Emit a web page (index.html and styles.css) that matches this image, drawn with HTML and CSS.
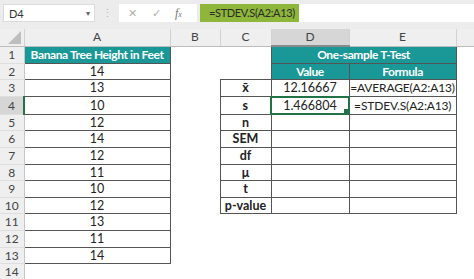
FILE: index.html
```html
<!DOCTYPE html>
<html>
<head>
<meta charset="utf-8">
<link rel="stylesheet" href="styles.css">
</head>
<body>
<div class="toolbar">
  <div class="namebox"><span class="name">D4</span><span class="caret">&#9662;</span></div>
  <div class="sep">&#8942;</div>
  <div class="fnbox">
    <span class="ico x">&#10005;</span>
    <span class="ico chk">&#10003;</span>
    <span class="ico fx"><i>f</i><small>x</small></span>
  </div>
  <div class="formula"><span class="sel">=STDEV.S(A2:A13)</span></div>
</div>
<table class="sheet">
  <colgroup>
    <col class="c-rh"><col class="c-a"><col class="c-b"><col class="c-c"><col class="c-d"><col class="c-e"><col class="c-f">
  </colgroup>
  <tr class="hdr">
    <th class="corner"><span class="tri"></span></th><th>A</th><th>B</th><th>C</th><th class="hsel">D</th><th>E</th><th></th>
  </tr>
  <tr><th class="rh">1</th><td class="b teal">Banana Tree Height in Feet</td><td></td><td></td><td class="b teal" colspan="2">One-sample T-Test</td><td></td></tr>
  <tr><th class="rh">2</th><td class="b">14</td><td></td><td></td><td class="b teal">Value</td><td class="b teal lsep">Formula</td><td></td></tr>
  <tr><th class="rh">3</th><td class="b">13</td><td></td><td class="b lab">x&#772;</td><td class="b">12.16667</td><td class="b fm">=AVERAGE(A2:A13)</td><td></td></tr>
  <tr><th class="rh rsel">4</th><td class="b">10</td><td></td><td class="b lab">s</td><td class="b cur">1.466804<span class="handle"></span></td><td class="b fm">=STDEV.S(A2:A13)</td><td></td></tr>
  <tr><th class="rh">5</th><td class="b">12</td><td></td><td class="b lab">n</td><td class="b"></td><td class="b"></td><td></td></tr>
  <tr><th class="rh">6</th><td class="b">14</td><td></td><td class="b lab">SEM</td><td class="b"></td><td class="b"></td><td></td></tr>
  <tr><th class="rh">7</th><td class="b">12</td><td></td><td class="b lab">df</td><td class="b"></td><td class="b"></td><td></td></tr>
  <tr><th class="rh">8</th><td class="b">11</td><td></td><td class="b lab">&#956;</td><td class="b"></td><td class="b"></td><td></td></tr>
  <tr><th class="rh">9</th><td class="b">10</td><td></td><td class="b lab">t</td><td class="b"></td><td class="b"></td><td></td></tr>
  <tr><th class="rh">10</th><td class="b">12</td><td></td><td class="b lab">p-value</td><td class="b"></td><td class="b"></td><td></td></tr>
  <tr><th class="rh">11</th><td class="b">13</td><td></td><td></td><td></td><td></td><td></td></tr>
  <tr><th class="rh">12</th><td class="b">11</td><td></td><td></td><td></td><td></td><td></td></tr>
  <tr><th class="rh">13</th><td class="b">14</td><td></td><td></td><td></td><td></td><td></td></tr>
  <tr><th class="rh">14</th><td></td><td></td><td></td><td></td><td></td><td></td></tr>
</table>
</body>
</html>
```
FILE: styles.css
```css
html, body {
  margin: 0;
  padding: 0;
  background: #ffffff;
  width: 474px;
  height: 279px;
  overflow: hidden;
  font-family: Lato, "Open Sans", sans-serif;
}
.toolbar {
  display: flex;
  align-items: stretch;
  height: 18px;
  padding: 4px 0 7px 3px;
  background: #ececec;
}
.namebox {
  width: 92px;
  background: #fff;
  border: 1px solid #dcdcdc;
  box-sizing: border-box;
  display: flex;
  align-items: center;
  justify-content: space-between;
  padding: 0 4px 0 5px;
  font-size: 11px;
  color: #333;
}
.caret { font-size: 8px; color: #666; }
.sep {
  width: 24px;
  display: flex;
  align-items: center;
  justify-content: center;
  color: #b5b5b5;
  font-size: 11px;
}
.fnbox {
  width: 78px;
  background: #fff;
  display: flex;
  align-items: center;
  color: #b0b0b0;
  font-size: 11px;
}
.ico.x { margin-left: 9px; }
.ico.chk { margin-left: 15px; }
.ico.fx {
  margin-left: 14px;
  font-family: "Liberation Serif", serif;
  color: #777;
  font-size: 12px;
}
.ico.fx small { font-size: 8px; font-style: italic; }
.formula {
  flex: 1;
  margin-left: 3px;
  background: #fff;
  display: flex;
}
.sel {
  background: #8db63b;
  color: #2a2a2a;
  font-size: 11px;
  letter-spacing: -0.35px;
  line-height: 18px;
  padding: 0 0 0 9px;
  width: 99px;
  box-sizing: border-box;
  white-space: nowrap;
}
.sheet {
  border-collapse: collapse;
  table-layout: fixed;
  width: 474px;
  font-size: 12.5px;
  color: #222;
}
.c-rh { width: 24px; }
.c-a { width: 146px; }
.c-b { width: 50px; }
.c-c { width: 51px; }
.c-d { width: 78px; }
.c-e { width: 107px; }
.c-f { width: 18px; }
.sheet td, .sheet th {
  padding: 0;
  text-align: center;
  white-space: nowrap;
  overflow: hidden;
  line-height: 15.6px;
}
.hdr th {
  line-height: 16px;
  background: #efefef;
  font-weight: normal;
  color: #444;
  border-right: 1px solid #d2d2d2;
  border-bottom: 1px solid #bdbdbd;
  font-size: 12px;
}
.hdr th.hsel {
  background: #d6d6d6;
  border-bottom: 2px solid #8a8a8a;
}
.corner { position: relative; }
.tri {
  position: absolute;
  right: 3px;
  bottom: 2px;
  width: 0;
  height: 0;
  border-left: 13px solid transparent;
  border-bottom: 13px solid #bebebe;
}
.rh {
  background: #efefef;
  font-weight: normal;
  font-size: 12px;
  color: #444;
  border-right: 1px solid #c6c6c6;
  border-bottom: 1px solid #dedede;
}
.rh.rsel {
  background: #d6d6d6;
  border-right: 2px solid #217346;
}
.b { border: 1px solid #555; }
.teal {
  background: #1a9898;
  color: #fff;
  font-weight: 700;
  font-size: 12px;
  letter-spacing: -0.4px;
}
.fm { font-size: 12px; letter-spacing: -0.15px; }
.lsep { border-left: 1px solid #cfe3e3; }
.lab { font-weight: 700; }
.cur {
  border: 2px solid #217346;
  position: relative;
}
.handle {
  position: absolute;
  right: -1px;
  bottom: -1px;
  width: 4px;
  height: 4px;
  background: #217346;
  border: 1px solid #fff;
}
```
